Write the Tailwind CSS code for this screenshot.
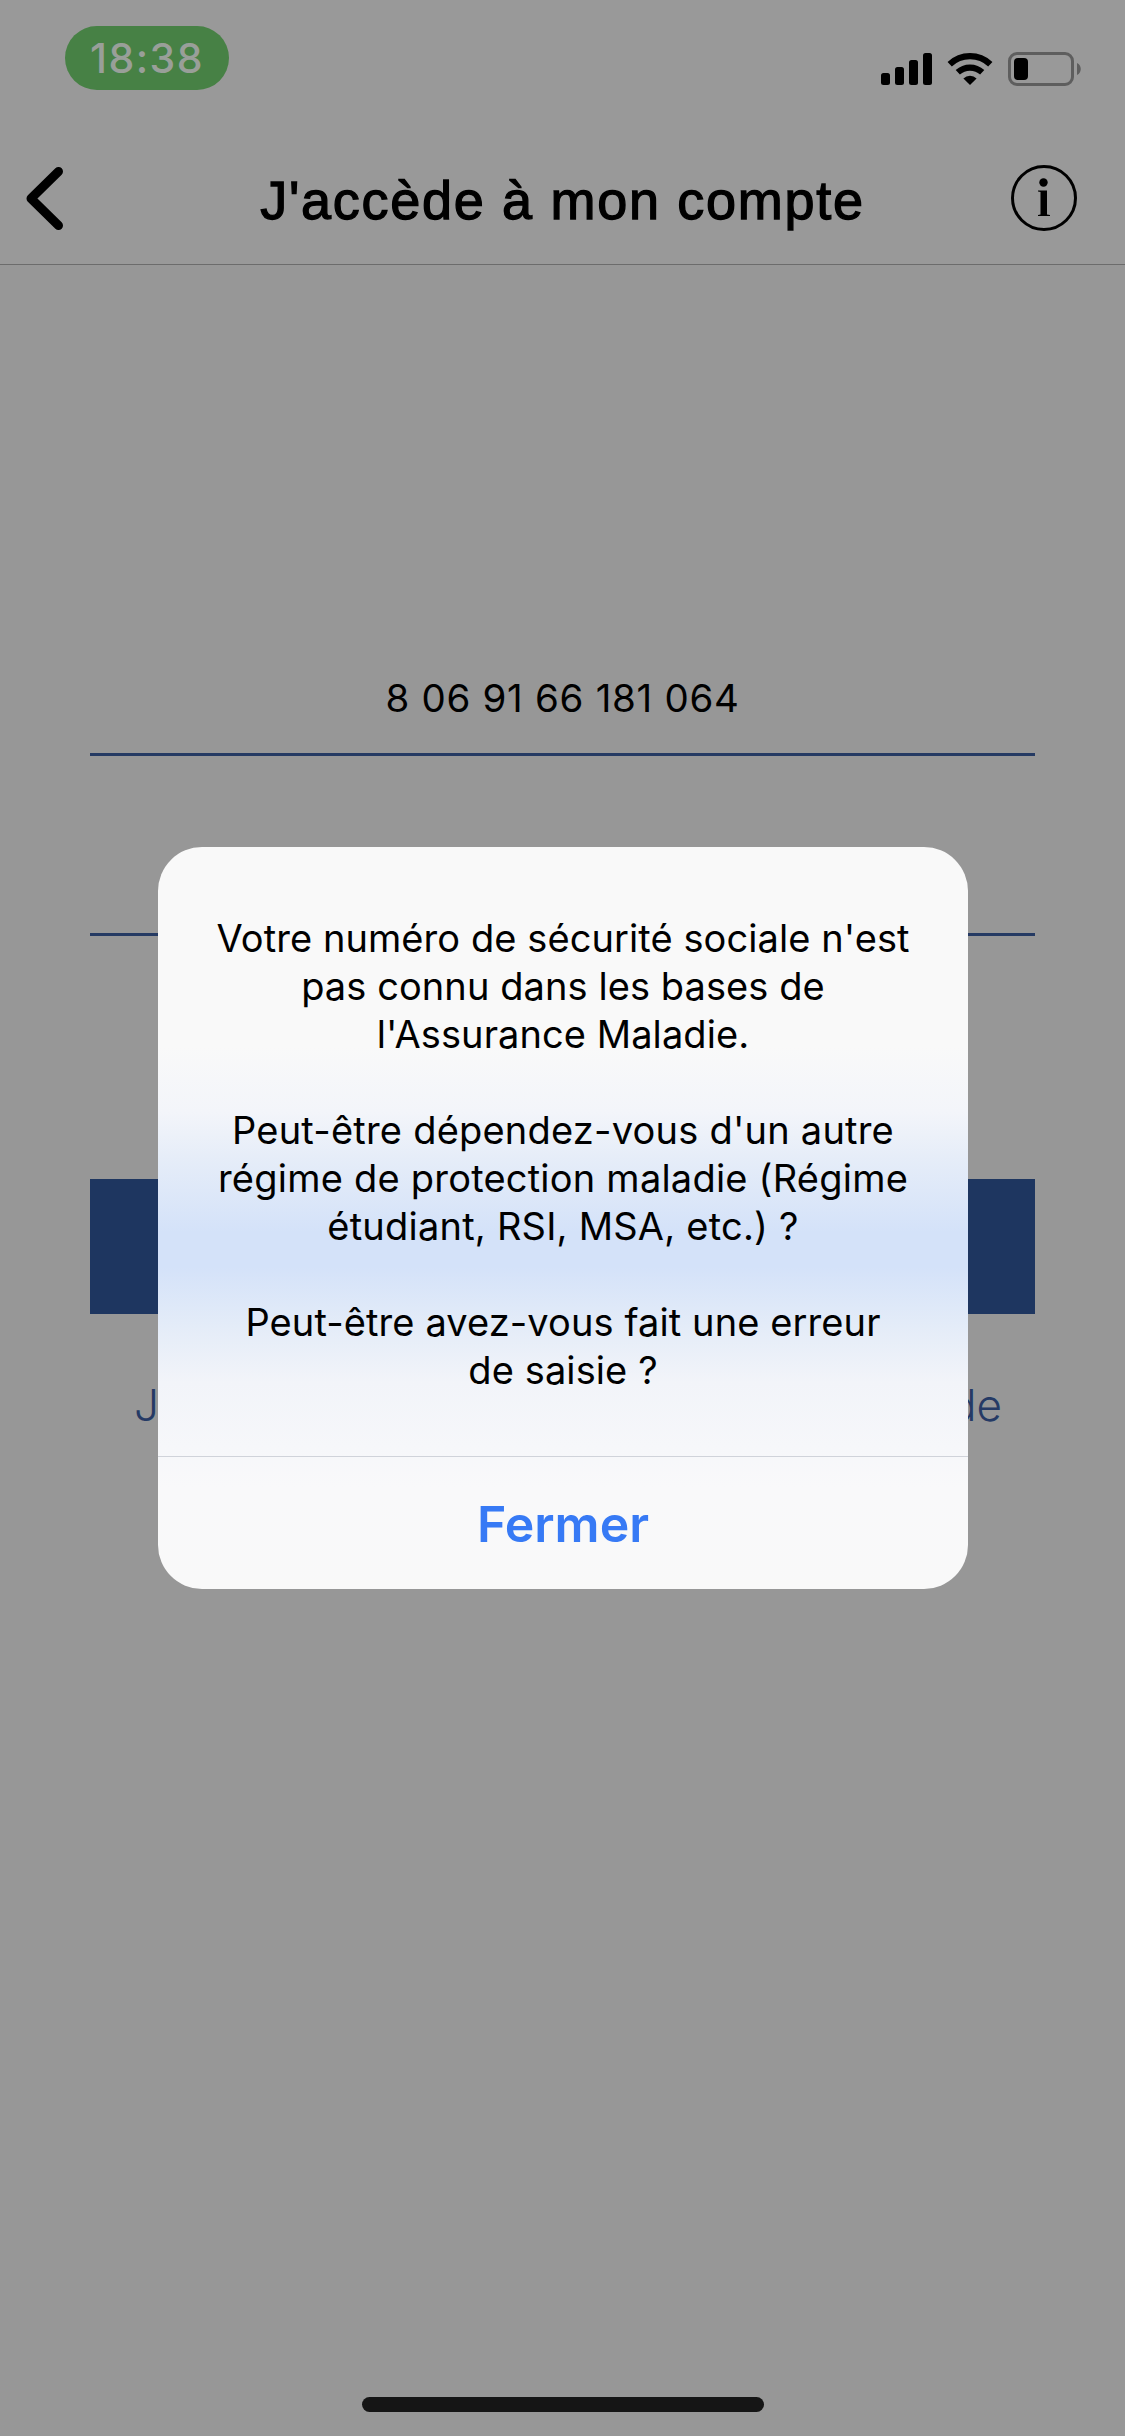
<!DOCTYPE html>
<html lang="fr">
<head>
  <meta charset="UTF-8" />
  <meta name="viewport" content="width=device-width, initial-scale=1.0"/>
  <title>J'accède à mon compte</title>
  <script src="https://cdn.jsdelivr.net/npm/@tailwindcss/browser@4"></script>
</head>
<body class="font-['Inter',sans-serif]">
<div class="relative flex flex-col w-[1125px] h-[2436px] bg-[#979797] overflow-hidden">
  <header class="h-[265px] bg-[#999999] border-b border-[#6c6c6c]">
    <!-- status bar -->
    <div class="flex justify-between h-[140px] pt-[26px] pl-[65px] pr-[44px]">
      <div class="w-[164px] h-[64px] rounded-[32px] bg-[#478145] text-[#999f99] text-[41px] leading-[64px] tracking-[1.400px] font-medium text-center">18:38</div>
      <svg class="mt-[26px]" width="200" height="34" viewBox="881 52 200 34">
        <rect x="881" y="73" width="9" height="12" rx="2.5"/>
        <rect x="895" y="67" width="9" height="18" rx="2.5"/>
        <rect x="909" y="60" width="9" height="25" rx="2.5"/>
        <rect x="923" y="53" width="9" height="32" rx="2.5"/>
        <path d="M949.700 64.200A29.500 29.500 0 0 1 990.300 64.200" fill="none" stroke="#000" stroke-width="6.200"/>
        <path d="M957.800 72.300A18 18 0 0 1 982.200 72.300" fill="none" stroke="#000" stroke-width="6.200"/>
        <path d="M963.400 78.400A9.500 9.500 0 0 1 976.600 78.400L970 85Z"/>
        <rect x="1009.500" y="53.500" width="63" height="31" rx="7.500" fill="none" stroke="#5e5e5e" stroke-width="3"/>
        <rect x="1014" y="58" width="14" height="22" rx="4"/>
        <path d="M1077 63C1082 65 1082 73 1077 75Z" fill="#5e5e5e"/>
      </svg>
    </div>
    <!-- title bar -->
    <div class="flex items-center justify-between h-[116px] pl-[24px] pr-[48px]">
      <svg class="mr-[48px]" width="42" height="66" viewBox="24 165 42 66" fill="none" stroke="#000" stroke-width="9" stroke-linecap="round" stroke-linejoin="round"><path d="M58.500 171.500L31 198.500L58.500 225.500"/></svg>
      <h1 class="pt-[3px] font-['Liberation_Sans',sans-serif] text-[54px] leading-[60px] tracking-[1.700px] [-webkit-text-stroke:1.300px_#000]">J'accède à mon compte</h1>
      <svg width="66" height="66" viewBox="1011 165 66 66">
        <circle cx="1044" cy="198" r="31.500" fill="none" stroke="#000" stroke-width="3"/>
        <circle cx="1043.500" cy="182.500" r="4.200"/>
        <path d="M1038 190.500H1047V214.500L1050 215V216H1038V215L1040.500 214.500V192L1038 191.500Z"/>
      </svg>
    </div>
  </header>
  <main class="flex flex-col px-[90px]">
    <div class="h-[491px] pt-[409px] border-b-[3px] border-[#253a63] text-center text-[38.500px] leading-[48px] tracking-[0.700px]">8 06 91 66 181 064</div>
    <div class="h-[180px] border-b-[3px] border-[#253a63]"></div>
    <div class="mt-[243px] h-[135px] bg-[#1e3660]"></div>
    <div class="flex justify-between mt-[59px] pl-[44px] pr-[33px] text-[#253a65] text-[44px] leading-[64px] font-light"><span>J</span><span>de</span></div>
  </main>
  <!-- alert -->
  <div class="absolute left-[158px] top-[847px] w-[810px] h-[742px] rounded-[44px] overflow-hidden flex flex-col bg-linear-[180deg,#f9f9f9_0px,#f9f9f9_200px,#f3f5fa_265px,#e6edf8_310px,#d4e2f9_385px,#d4e2f9_420px,#e4ecf8_480px,#f2f4f9_535px,#f6f7fa_600px,#f9f9fa_640px,#f9f9f9_742px]">
    <div class="h-[609px] pt-[67px] text-center text-[38px] leading-[48px]">
      <p class="tracking-[0.080px]">Votre numéro de sécurité sociale n'est<br>pas connu dans les bases de<br>l'Assurance Maladie.</p>
      <p class="mt-[48px] tracking-[0.220px]">Peut-être dépendez-vous d'un autre<br>régime de protection maladie (Régime<br>étudiant, RSI, MSA, etc.) ?</p>
      <p class="mt-[48px] tracking-[0.100px]">Peut-être avez-vous fait une erreur<br>de saisie ?</p>
    </div>
    <button class="h-[133px] pt-[3px] border-t border-[#d0d3da] text-[#377af5] text-[50px] font-semibold">Fermer</button>
  </div>
  <!-- home indicator -->
  <div class="absolute left-[362px] top-[2397px] w-[402px] h-[15px] rounded-full bg-[#151515]"></div>
</div>
</body>
</html>
